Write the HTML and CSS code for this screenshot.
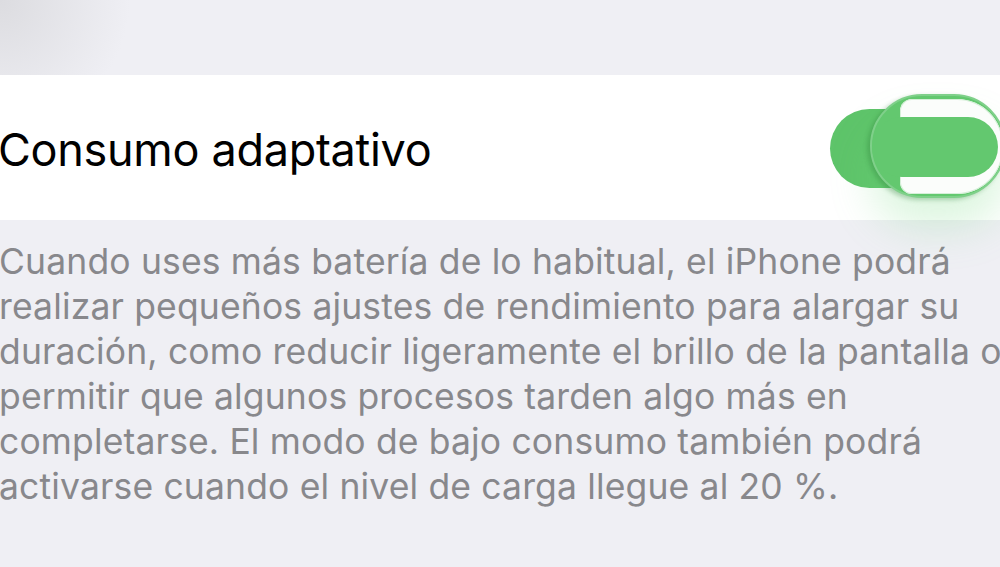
FILE: index.html
```html
<!DOCTYPE html>
<html lang="es">
<head>
  <meta charset="UTF-8" />
  <meta name="viewport" content="width=device-width, initial-scale=1.0"/>
  <title>Batería</title>
  <link rel="stylesheet" href="styles.css">
</head>
<body>
  <div class="settings">
    <div class="cell">
      <span class="cell-label">Consumo adaptativo</span>
      <div class="switch">
        <span class="switch-track"></span>
        <span class="switch-thumb">
          <span class="glass-ring"></span>
          <span class="glass-core"></span>
        </span>
      </div>
    </div>
    <p class="footnote">
      <span>Cuando uses más batería de lo habitual, el iPhone podrá</span>
      <span>realizar pequeños ajustes de rendimiento para alargar su</span>
      <span>duración, como reducir ligeramente el brillo de la pantalla o</span>
      <span>permitir que algunos procesos tarden algo más en</span>
      <span>completarse. El modo de bajo consumo también podrá</span>
      <span>activarse cuando el nivel de carga llegue al 20 %.</span>
    </p>
  </div>
</body>
</html>
```

FILE: styles.css
```css
* {
  box-sizing: border-box;
  margin: 0;
  padding: 0;
}

html, body {
  height: 100%;
  overflow: hidden;
}

body {
  background: radial-gradient(circle at 0 0, #dcdce0 0, #efeff4 130px) #efeff4;
  font-family: Inter, "Noto Sans", sans-serif;
  -webkit-font-smoothing: antialiased;
}

.settings {
  padding-top: 75px;
  margin-left: -32px;
  width: calc(100% + 64px);
}

.cell {
  height: 145px;
  background: #fff;
  border-radius: 26px;
  display: flex;
  align-items: center;
  justify-content: space-between;
  padding-left: 30px;
}

.cell-label {
  font-size: 45px;
  color: #000;
  letter-spacing: -0.3px;
  margin-top: 4px;
}

/* switch caught mid-drag: track on the left, magnified glass thumb on top */
.switch {
  position: relative;
  width: 210px;
  height: 110px;
  margin-right: -8px;
}

.switch-track {
  position: absolute;
  left: 0;
  top: 16px;
  width: 150px;
  height: 79px;
  border-radius: 40px;
  background: #5ec46a;
}

.switch-thumb {
  position: absolute;
  left: 40px;
  top: 1px;
  width: 136px;
  height: 104px;
  border-radius: 52px;
  background: #63c86f;
  border: 2px solid #7fd08a;
  box-shadow: -3px 2px 4px rgba(40, 120, 50, 0.3), 0 30px 40px rgba(120, 220, 130, 0.25);
}

.glass-ring {
  position: absolute;
  left: 28px;
  top: 3px;
  right: 1px;
  bottom: 2px;
  background: #fbfdfb;
  border-radius: 12px 46px 46px 12px;
  box-shadow: inset 0 0 0 1px #d6efd9;
}

.glass-core {
  position: absolute;
  left: 0;
  top: 21px;
  right: 6px;
  bottom: 19px;
  background: #63c86f;
  border-radius: 32px;
}

.footnote {
  padding: 19px 0 0 31px;
  font-size: 35.5px;
  line-height: 45px;
  color: #88888c;
  letter-spacing: 0.15px;
}

.footnote span {
  display: block;
  white-space: nowrap;
}
```
